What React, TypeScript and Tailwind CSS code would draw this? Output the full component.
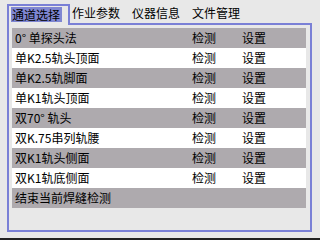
import React from 'react'

const rows = [
  { name: '0° 单探头法', ops: true },
  { name: '单K2.5轨头顶面', ops: true },
  { name: '单K2.5轨脚面', ops: true },
  { name: '单K1轨头顶面', ops: true },
  { name: '双70° 轨头', ops: true },
  { name: '双K.75串列轨腰', ops: true },
  { name: '双K1轨头侧面', ops: true },
  { name: '双K1轨底侧面', ops: true },
  { name: '结束当前焊缝检测', ops: false },
]

const tabs = ['作业参数', '仪器信息', '文件管理']

export default function App() {
  return (
    <div
      className="w-[320px] h-[240px] bg-[#e8e8e8] flex flex-col text-[12px] leading-[14px] text-black overflow-hidden"
      style={{ fontFamily: '"Noto Sans CJK SC", "DejaVu Sans", sans-serif' }}
    >
      {/* Tab bar */}
      <div className="flex items-end pl-[7px] pt-[4px] h-[25px] relative z-10">
        <div className="w-[63px] h-[21px] border-2 border-b-0 border-[#7a80d6] bg-[#e8e8e8] pl-[2px] pt-[1px]">
          <span className="inline-block bg-[#7f86d2] px-[1px] h-[15px] leading-[15px] w-[51px]">通道选择</span>
        </div>
        {tabs.map((t) => (
          <div key={t} className="w-[60px] h-[21px] pl-[2px] pt-[2px]">
            {t}
          </div>
        ))}
      </div>

      {/* Frame */}
      <div className="ml-[7px] w-[305px] h-[209px] -mt-[2px] border-2 border-[#7a80d6] pt-[3px] pl-[3px] pr-[4px]">
        <div className="flex flex-col">
          {rows.map((r, i) => (
            <div
              key={i}
              className={`flex items-center h-[20px] pl-[3px] ${i % 2 === 0 ? 'bg-[#aeaaae]' : 'bg-white'}`}
            >
              <span className="w-[177px]">{r.name}</span>
              {r.ops && <span className="w-[50px]">检测</span>}
              {r.ops && <span>设置</span>}
            </div>
          ))}
        </div>
      </div>

      <div className="flex-1" />
      <div className="h-[2px] bg-[#222222]" />
    </div>
  )
}
